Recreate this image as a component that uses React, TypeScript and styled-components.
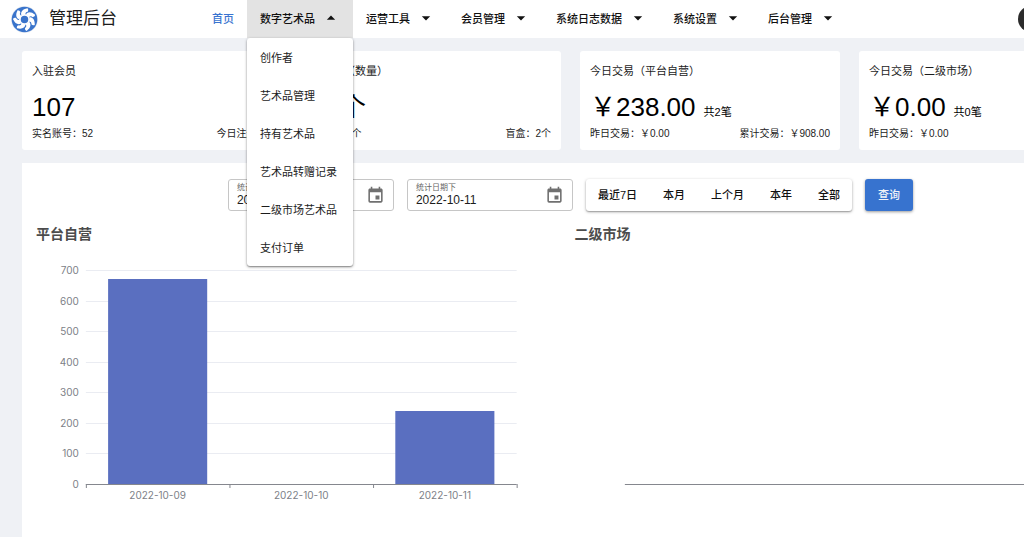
import React from 'react';
import styled, { createGlobalStyle } from 'styled-components';
import { MdArrowDropDown, MdArrowDropUp, MdEvent } from 'react-icons/md';

const GlobalStyle = createGlobalStyle`
  *, *::before, *::after { box-sizing: border-box; }
  html { background: #eff1f5; }
  body {
    margin: 0;
    color: #1c1c1c;
    font-family: "Liberation Sans", "Noto Sans CJK SC", sans-serif;
    font-size: 11px;
  }
  button, input { font: inherit; color: inherit; }
`;

const Viewport = styled.div`
  overflow-x: clip;
`;

const Page = styled.div`
  min-width: 1141px;
  min-height: 100vh;
  display: flex;
  flex-direction: column;
`;

const Header = styled.header`
  display: flex;
  align-items: center;
  height: 38px;
  padding: 0 97px 0 11px;
  background: #fff;
`;

const Brand = styled.div`
  display: flex;
  align-items: center;
  gap: 11px;
  width: 188px;
`;

const BrandName = styled.h1`
  margin: 0;
  font-size: 17px;
  font-weight: 400;
  line-height: 24px;
`;

const Nav = styled.nav`
  display: flex;
  flex: 1;
  height: 100%;
`;

const NavItem = styled.div`
  position: relative;
`;

const NavLink = styled.a`
  display: flex;
  align-items: center;
  height: 100%;
  padding: 0 13px 2px;
  color: #3a74d0;
  font-weight: 500;
  text-decoration: none;
`;

const NavButton = styled.button<{ $open?: boolean }>`
  display: flex;
  align-items: center;
  gap: 6px;
  height: 100%;
  padding: 0 13px 2px;
  border: 0;
  background: ${({ $open }) => ($open ? '#e3e3e3' : 'transparent')};
  color: #111;
  font-weight: 500;
  white-space: nowrap;
  cursor: pointer;

  svg { width: 20px; height: 20px; margin-right: -1px; }
`;

const Menu = styled.ul`
  position: absolute;
  z-index: 10;
  top: 100%;
  left: 0;
  min-width: 100%;
  margin: 0;
  padding: 0;
  list-style: none;
  border-radius: 3px;
  background: #fff;
  box-shadow: 0 1px 3px rgba(0, 0, 0, 0.4), 0 1px 1px rgba(0, 0, 0, 0.2);
`;

const MenuLink = styled.a`
  display: flex;
  align-items: center;
  height: 38px;
  padding: 0 13px 1px;
  color: #1c1c1c;
  text-decoration: none;
  white-space: nowrap;
`;

const Avatar = styled.button`
  width: 26px;
  height: 26px;
  padding: 0;
  border: 0;
  border-radius: 50%;
  background: #2b2b2b;
`;

const Main = styled.main`
  flex: 1;
  display: flex;
  flex-direction: column;
  gap: 13px;
  padding: 13px 22px 0;
`;

const Cards = styled.section`
  display: grid;
  grid-template-columns: repeat(4, 1fr);
  gap: 19px;
`;

const Card = styled.article`
  padding: 12px 10px 8px;
  border-radius: 3px;
  background: #fff;
`;

const CardTitle = styled.h2`
  margin: 0 0 9px;
  font-size: 11px;
  font-weight: 400;
  line-height: 16px;
`;

const CardFigure = styled.p`
  display: flex;
  align-items: baseline;
  gap: 8px;
  margin: 0;
  color: #000;
  font-size: 26px;
  line-height: 38px;
`;

const FigureNote = styled.span`
  font-size: 11px;
  line-height: 16px;
`;

const CardFooter = styled.div`
  display: flex;
  justify-content: space-between;
  font-size: 10px;
  line-height: 16px;
`;

const Panel = styled.section`
  flex: 1;
  padding: 16px 10px 0;
  background: #fff;
`;

const Toolbar = styled.form`
  display: flex;
  justify-content: center;
  gap: 13px;
  margin-bottom: 12px;
`;

const Field = styled.div`
  display: flex;
  align-items: center;
  width: 166px;
  height: 32px;
  padding: 0 8px;
  border: 1px solid #c6c6c6;
  border-radius: 3px;
`;

const FieldText = styled.div`
  flex: 1;
  display: flex;
  flex-direction: column;
  min-width: 0;
`;

const FieldLabel = styled.label`
  color: #666;
  font-size: 8px;
  line-height: 10px;
`;

const FieldInput = styled.input`
  width: 100%;
  height: 14px;
  padding: 0;
  border: 0;
  outline: 0;
  background: transparent;
  font-size: 12px;
  line-height: 14px;
`;

const IconButton = styled.button`
  display: flex;
  padding: 0;
  border: 0;
  background: transparent;
  color: #707070;

  svg { width: 19px; height: 19px; }
`;

const ButtonGroup = styled.div`
  display: flex;
  gap: 2px;
  height: 32px;
  border-radius: 3px;
  background: #fff;
  box-shadow: 0 1px 3px rgba(0, 0, 0, 0.35), 0 1px 1px rgba(0, 0, 0, 0.15);
`;

const RangeButton = styled.button`
  padding: 0 12px 2px;
  border: 0;
  background: transparent;
  color: #111;
  font-weight: 500;
  white-space: nowrap;
`;

const QueryButton = styled(RangeButton)`
  height: 32px;
  padding: 0 13px 2px;
  border-radius: 3px;
  background: #3773cf;
  color: #f0f3f8;
  box-shadow: 0 1px 3px rgba(0, 0, 0, 0.4);
`;

const Charts = styled.div`
  display: grid;
  grid-template-columns: 1fr 1fr;
`;

const ChartBox = styled.figure`
  margin: 0;
`;

const ChartTitle = styled.figcaption`
  height: 24px;
  padding-left: 4px;
  color: #4c4c4c;
  font-size: 14px;
  font-weight: 700;
  line-height: 22px;
`;

const ChartSvg = styled.svg`
  display: block;
  width: 100%;
  height: 286px;

  text {
    fill: #7d7f87;
    font-family: Inter, sans-serif;
    font-size: 10px;
  }
`;

const Logo = () => (
  <svg width="27" height="27" viewBox="-13.5 -13.5 27 27" aria-hidden="true">
    <circle r="13.2" fill="#fff" stroke="#dfe3ea" strokeWidth="0.6" />
    <circle r="12.8" fill="#3a74cb" />
    {Array.from({ length: 7 }, (_, i) => (
      <path
        key={i}
        transform={`rotate(${(i * 360) / 7})`}
        d="M-3.2 -4.4C-4 -7.2 -2.4 -10.2 3 -11.2C3.9 -10.2 4 -8.8 3.2 -7.8C1.6 -7.8 0.9 -6.6 0.8 -4.8Z"
        fill="#fff"
      />
    ))}
    <circle r="4.6" fill="none" stroke="#fff" strokeWidth="1.7" />
  </svg>
);

type Point = { label: string; value: number };

const AXIS_TOP = 24;
const AXIS_BOTTOM = 238;
const AXIS_MAX = 700;
const GRID_VALUES = [100, 200, 300, 400, 500, 600, 700];
const yFor = (v: number) => Math.round(AXIS_BOTTOM - (v / AXIS_MAX) * (AXIS_BOTTOM - AXIS_TOP));

const BarChart = ({ title, points }: { title: string; points: Point[] }) => {
  const step = 100 / Math.max(points.length, 1);
  return (
    <ChartBox>
      <ChartTitle>{title}</ChartTitle>
      <ChartSvg role="img" aria-label={title}>
        <svg x="10%" width="80%" height="100%" overflow="visible">
          {points.length > 0 &&
            GRID_VALUES.map((v) => (
              <g key={v}>
                <rect y={yFor(v) - 1} width="100%" height="1" fill="#eaecf2" />
                <text x="-7" y={yFor(v) + 3} textAnchor="end">{v}</text>
              </g>
            ))}
          {points.length > 0 && <text x="-7" y={AXIS_BOTTOM + 3} textAnchor="end">0</text>}
          {points.map((p, i) => (
            <g key={p.label}>
              <rect
                x={`${step * (i + 0.155)}%`}
                y={yFor(p.value) - 1}
                width={`${step * 0.69}%`}
                height={AXIS_BOTTOM - yFor(p.value)}
                fill="#5a6fc0"
              />
              <text x={`${step * (i + 0.5)}%`} y={AXIS_BOTTOM + 14} textAnchor="middle">{p.label}</text>
            </g>
          ))}
          <rect y={AXIS_BOTTOM - 1} width="100%" height="1" fill="#85878e" />
          {points.length > 0 &&
            Array.from({ length: points.length + 1 }, (_, i) => (
              <rect key={i} x={`${step * i}%`} y={AXIS_BOTTOM - 1} width="1" height="4" fill="#85878e" />
            ))}
        </svg>
      </ChartSvg>
    </ChartBox>
  );
};

const menuItems = ['创作者', '艺术品管理', '持有艺术品', '艺术品转赠记录', '二级市场艺术品', '支付订单'];
const navItems = ['运营工具', '会员管理', '系统日志数据', '系统设置', '后台管理'];
const ranges = ['最近7日', '本月', '上个月', '本年', '全部'];

const cards = [
  { title: '入驻会员', figure: '107', note: '', left: '实名账号：52', right: '今日注册：0' },
  { title: '艺术品（数量）', figure: '13个', note: '', left: '单品：11个', right: '盲盒：2个' },
  { title: '今日交易（平台自营）', figure: '￥238.00', note: '共2笔', left: '昨日交易：￥0.00', right: '累计交易：￥908.00' },
  { title: '今日交易（二级市场）', figure: '￥0.00', note: '共0笔', left: '昨日交易：￥0.00', right: '累计交易：￥0.00' },
];

const ownSales: Point[] = [
  { label: '2022-10-09', value: 670 },
  { label: '2022-10-10', value: 0 },
  { label: '2022-10-11', value: 238 },
];

const DateField = ({ id, label, value }: { id: string; label: string; value: string }) => (
  <Field>
    <FieldText>
      <FieldLabel htmlFor={id}>{label}</FieldLabel>
      <FieldInput id={id} type="text" defaultValue={value} />
    </FieldText>
    <IconButton type="button" aria-label="选择日期">
      <MdEvent />
    </IconButton>
  </Field>
);

export default function App() {
  return (
    <Viewport>
      <GlobalStyle />
      <Page>
        <Header>
          <Brand>
            <Logo />
            <BrandName>管理后台</BrandName>
          </Brand>
          <Nav>
            <NavLink href="#home">首页</NavLink>
            <NavItem>
              <NavButton type="button" $open aria-expanded="true">
                数字艺术品
                <MdArrowDropUp />
              </NavButton>
              <Menu>
                {menuItems.map((m) => (
                  <li key={m}>
                    <MenuLink href="#menu">{m}</MenuLink>
                  </li>
                ))}
              </Menu>
            </NavItem>
            {navItems.map((n) => (
              <NavItem key={n}>
                <NavButton type="button" aria-expanded="false">
                  {n}
                  <MdArrowDropDown />
                </NavButton>
              </NavItem>
            ))}
          </Nav>
          <Avatar type="button" aria-label="账号" />
        </Header>
        <Main>
          <Cards>
            {cards.map((c) => (
              <Card key={c.title}>
                <CardTitle>{c.title}</CardTitle>
                <CardFigure>
                  {c.figure}
                  {c.note && <FigureNote>{c.note}</FigureNote>}
                </CardFigure>
                <CardFooter>
                  <span>{c.left}</span>
                  <span>{c.right}</span>
                </CardFooter>
              </Card>
            ))}
          </Cards>
          <Panel>
            <Toolbar>
              <DateField id="date-from" label="统计日期上" value="2022-10-09" />
              <DateField id="date-to" label="统计日期下" value="2022-10-11" />
              <ButtonGroup role="group" aria-label="时间范围">
                {ranges.map((r) => (
                  <RangeButton key={r} type="button">{r}</RangeButton>
                ))}
              </ButtonGroup>
              <QueryButton type="button">查询</QueryButton>
            </Toolbar>
            <Charts>
              <BarChart title="平台自营" points={ownSales} />
              <BarChart title="二级市场" points={[]} />
            </Charts>
          </Panel>
        </Main>
      </Page>
    </Viewport>
  );
}
